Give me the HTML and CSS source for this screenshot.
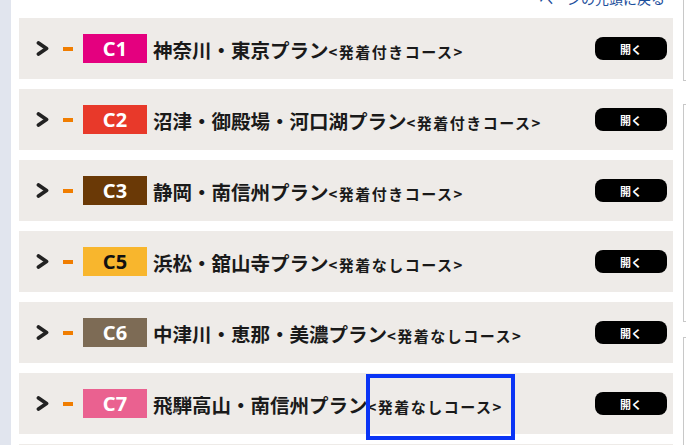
FILE: index.html
```html
<!DOCTYPE html>
<html lang="ja">
<head>
  <meta charset="UTF-8">
  <meta name="viewport" content="width=device-width, initial-scale=1.0">
  <title>コース一覧</title>
  <link rel="stylesheet" href="styles.css">
</head>
<body>
  <div class="page">
    <div class="side-strip"></div>

    <main class="main">
      <div class="top-link"><a href="#">ページの先頭に戻る</a></div>

      <ul class="course-list">
        <li class="course">
          <svg class="chevron" viewBox="0 0 13 15"><polyline points="2.5,2 10.5,7.5 2.5,13" /></svg>
          <span class="dash"></span>
          <span class="badge c1">C1</span>
          <span class="title">神奈川・東京プラン<small>&lt;発着付きコース&gt;</small></span>
          <button class="open-btn">開く</button>
        </li>
        <li class="course">
          <svg class="chevron" viewBox="0 0 13 15"><polyline points="2.5,2 10.5,7.5 2.5,13" /></svg>
          <span class="dash"></span>
          <span class="badge c2">C2</span>
          <span class="title">沼津・御殿場・河口湖プラン<small>&lt;発着付きコース&gt;</small></span>
          <button class="open-btn">開く</button>
        </li>
        <li class="course">
          <svg class="chevron" viewBox="0 0 13 15"><polyline points="2.5,2 10.5,7.5 2.5,13" /></svg>
          <span class="dash"></span>
          <span class="badge c3">C3</span>
          <span class="title">静岡・南信州プラン<small>&lt;発着付きコース&gt;</small></span>
          <button class="open-btn">開く</button>
        </li>
        <li class="course">
          <svg class="chevron" viewBox="0 0 13 15"><polyline points="2.5,2 10.5,7.5 2.5,13" /></svg>
          <span class="dash"></span>
          <span class="badge c5">C5</span>
          <span class="title">浜松・舘山寺プラン<small>&lt;発着なしコース&gt;</small></span>
          <button class="open-btn">開く</button>
        </li>
        <li class="course">
          <svg class="chevron" viewBox="0 0 13 15"><polyline points="2.5,2 10.5,7.5 2.5,13" /></svg>
          <span class="dash"></span>
          <span class="badge c6">C6</span>
          <span class="title">中津川・恵那・美濃プラン<small>&lt;発着なしコース&gt;</small></span>
          <button class="open-btn">開く</button>
        </li>
        <li class="course">
          <svg class="chevron" viewBox="0 0 13 15"><polyline points="2.5,2 10.5,7.5 2.5,13" /></svg>
          <span class="dash"></span>
          <span class="badge c7">C7</span>
          <span class="title">飛騨高山・南信州プラン<small class="marked">&lt;発着なしコース&gt;</small></span>
          <button class="open-btn">開く</button>
        </li>
        <li class="course"></li>
      </ul>
    </main>

    <aside class="aside">
      <div class="aside-box box-a"></div>
      <div class="aside-box box-b"></div>
      <div class="aside-box box-c"></div>
    </aside>
  </div>
</body>
</html>
```

FILE: styles.css
```css
/* === Cores === */
:root {
  --strip: #e1e5ee;
  --row-bg: #eeebe8;
  --text: #1a1a1a;
  --link: #1d4f9c;
  --dash: #f07d00;
  --border: #c8c8c8;
}

* {
  box-sizing: border-box;
  margin: 0;
  padding: 0;
}

html, body {
  height: 100%;
  overflow: hidden;
}

body {
  font-family: "Noto Sans CJK JP", "Noto Sans", sans-serif;
  color: var(--text);
  background: #fff;
}

.page {
  display: grid;
  grid-template-columns: 11px 672px 1fr;
  height: 100%;
}

.side-strip {
  background: var(--strip);
}

/* === Coluna principal === */
.main {
  padding-left: 8px;
  padding-right: 10px;
}

.top-link {
  height: 18px;
  text-align: right;
  padding-right: 8px;
  font-size: 14px;
  line-height: 14px;
  margin-top: -9px;
  margin-bottom: 9px;
}
.top-link a {
  color: var(--link);
  text-decoration: none;
}

.course-list {
  list-style: none;
}

.course {
  position: relative;
  display: flex;
  align-items: center;
  height: 61px;
  margin-bottom: 10px;
  padding: 0 6px 0 17px;
  background: var(--row-bg);
}

.chevron {
  width: 13px;
  height: 15px;
  flex: 0 0 auto;
}
.chevron polyline {
  fill: none;
  stroke: #222;
  stroke-width: 3.8;
  stroke-linecap: round;
  stroke-linejoin: round;
}

.dash {
  width: 10px;
  height: 4px;
  margin-left: 14px;
  background: var(--dash);
}

.badge {
  width: 64px;
  height: 29px;
  margin-left: 10px;
  margin-top: -1px;
  font-family: "Noto Sans", sans-serif;
  font-weight: bold;
  font-size: 20px;
  line-height: 29px;
  text-align: center;
  color: #fff;
}
.c1 { background: #e4007f; }
.c2 { background: #e8392a; }
.c3 { background: #6a3906; }
.c5 { background: #f8b62d; color: #111; }
.c6 { background: #7d6b55; }
.c7 { background: #ea6190; }

.title {
  margin-left: 6px;
  margin-top: 2px;
  font-size: 19.5px;
  font-weight: bold;
  white-space: nowrap;
}
.title small {
  font-size: 15px;
  letter-spacing: 0.1em;
}

/* marcação azul sobre o texto */
.marked {
  position: relative;
}
.marked::after {
  content: "";
  position: absolute;
  left: -2px;
  right: -12px;
  top: -22px;
  bottom: -23px;
  border: 4px solid #0a34f5;
}

.open-btn {
  margin-left: auto;
  width: 72px;
  height: 23px;
  border: none;
  border-radius: 8px;
  background: #000;
  color: #fff;
  font-family: "Noto Sans CJK JP", sans-serif;
  font-size: 11px;
  font-weight: bold;
  cursor: pointer;
}

/* === Coluna da direita === */
.aside {
  display: flex;
  flex-direction: column;
}
.aside-box {
  border: 1px solid var(--border);
  border-right: none;
}
.box-a {
  margin-top: -20px;
  height: 101px;
}
.box-b {
  margin-top: 23px;
  height: 218px;
}
.box-c {
  margin-top: 15px;
  height: 200px;
}
```
